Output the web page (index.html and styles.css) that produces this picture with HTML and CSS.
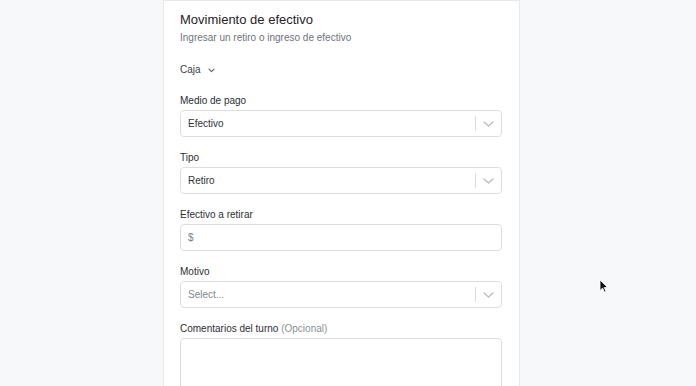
FILE: index.html
```html
<!DOCTYPE html>
<html lang="es">
<head>
<meta charset="utf-8">
<link rel="stylesheet" href="styles.css">
</head>
<body>
<div class="page">
  <section class="card">
    <h1 class="title">Movimiento de efectivo</h1>
    <p class="subtitle">Ingresar un retiro o ingreso de efectivo</p>
    <div class="caja">Caja
      <svg class="caja-chev" width="7" height="5" viewBox="0 0 7 5"><path d="M1 1.2l2.5 2.4 2.5-2.4" fill="none" stroke="#5a5e63" stroke-width="1.1" stroke-linecap="round" stroke-linejoin="round"/></svg>
    </div>

    <div class="field">
      <label class="label">Medio de pago</label>
      <div class="select">
        <span class="value">Efectivo</span>
        <span class="sep"></span>
        <svg class="chev" width="11" height="6" viewBox="0 0 11 6"><path d="M1 1l4.5 4 4.5-4" fill="none" stroke="#b8b8b8" stroke-width="1.2" stroke-linecap="round" stroke-linejoin="round"/></svg>
      </div>
    </div>

    <div class="field">
      <label class="label">Tipo</label>
      <div class="select">
        <span class="value">Retiro</span>
        <span class="sep"></span>
        <svg class="chev" width="11" height="6" viewBox="0 0 11 6"><path d="M1 1l4.5 4 4.5-4" fill="none" stroke="#b8b8b8" stroke-width="1.2" stroke-linecap="round" stroke-linejoin="round"/></svg>
      </div>
    </div>

    <div class="field">
      <label class="label">Efectivo a retirar</label>
      <div class="input"><span class="prefix">$</span></div>
    </div>

    <div class="field">
      <label class="label">Motivo</label>
      <div class="select">
        <span class="value placeholder">Select...</span>
        <span class="sep"></span>
        <svg class="chev" width="11" height="6" viewBox="0 0 11 6"><path d="M1 1l4.5 4 4.5-4" fill="none" stroke="#b8b8b8" stroke-width="1.2" stroke-linecap="round" stroke-linejoin="round"/></svg>
      </div>
    </div>

    <div class="field">
      <label class="label">Comentarios del turno <span class="optional">(Opcional)</span></label>
      <div class="textarea"></div>
    </div>
  </section>
</div>
<svg class="cursor" width="10" height="14" viewBox="0 0 10 14"><path d="M1 1v10.5l2.6-2.4 1.8 4 1.6-.7-1.8-3.9h3.4z" fill="#111" stroke="#fff" stroke-width="0.8" stroke-linejoin="round"/></svg>
</body>
</html>
```

FILE: styles.css
```css
html, body {
  margin: 0;
  padding: 0;
  height: 100%;
  overflow: hidden;
}
body {
  background: #f7f8fa;
  font-family: "Liberation Sans", Arial, sans-serif;
  color: #2b2f33;
}
.page {
  padding-left: 163px;
}
.card {
  width: 322px;
  min-height: 420px;
  background: #ffffff;
  border: 1px solid #e6e8ec;
  padding: 11px 17px 0 16px;
}
.title {
  margin: 0;
  font-size: 13px;
  line-height: 16px;
  font-weight: 400;
  color: #1e2226;
}
.subtitle {
  margin: 3px 0 0;
  font-size: 10px;
  line-height: 14px;
  color: #6f747a;
}
.caja {
  margin-top: 18px;
  font-size: 10px;
  line-height: 14px;
  color: #3a3e43;
  display: flex;
  align-items: center;
  gap: 7px;
}
.field {
  margin-top: 14px;
}
.caja + .field {
  margin-top: 17px;
}
.label {
  display: block;
  font-size: 10px;
  line-height: 14px;
  color: #2a2e32;
  margin-bottom: 2px;
}
.optional {
  color: #8a8f95;
}
.select, .input {
  box-sizing: border-box;
  height: 27px;
  border: 1px solid #dcdee2;
  border-radius: 4px;
  display: flex;
  align-items: center;
  padding-left: 7px;
  background: #fff;
}
.value {
  flex: 1;
  font-size: 10px;
  color: #2f3337;
}
.placeholder {
  color: #83878c;
}
.sep {
  width: 1px;
  height: 15px;
  background: #dcdcdc;
}
.chev {
  margin: 0 7px 0 7px;
}
.prefix {
  font-size: 10px;
  color: #7b8086;
}
.textarea {
  box-sizing: border-box;
  height: 80px;
  border: 1px solid #dcdee2;
  border-radius: 4px;
  background: #fff;
}
.cursor {
  position: absolute;
  left: 599px;
  top: 279px;
}
```
